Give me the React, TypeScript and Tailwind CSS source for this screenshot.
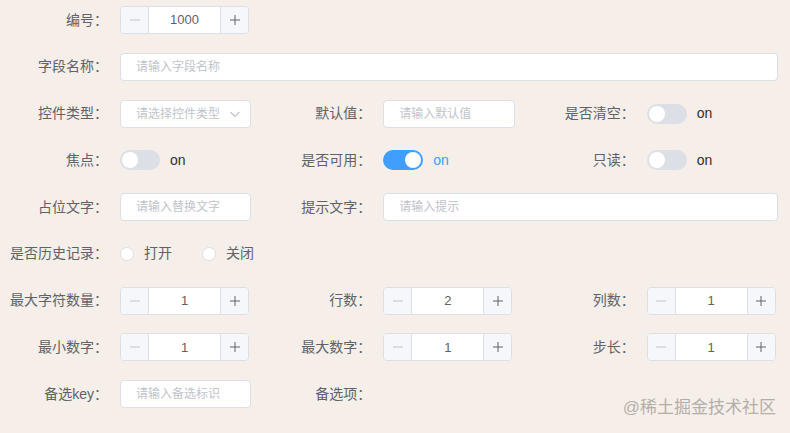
import React from "react";

const FONT = {
  fontFamily:
    '"Liberation Sans", "Noto Sans CJK SC", Arial, sans-serif',
};

function Item({
  label,
  children,
  className = "",
}: {
  label: string;
  children?: React.ReactNode;
  className?: string;
}) {
  return (
    <div className={"flex h-[28px] items-center pr-3 " + className}>
      <label className="w-[120px] shrink-0 pr-3 text-right text-[14px] text-[#606266]">
        {label}：
      </label>
      <div className="flex min-w-0 flex-1 items-center">{children}</div>
    </div>
  );
}

function TextInput({ placeholder }: { placeholder: string }) {
  return (
    <div className="flex h-[28px] w-full items-center rounded-[4px] border border-[#dcdfe6] bg-white px-[15px] text-[12px] text-[#c0c4cc]">
      {placeholder}
    </div>
  );
}

function SelectInput({ placeholder }: { placeholder: string }) {
  return (
    <div className="flex h-[28px] w-full items-center justify-between rounded-[4px] border border-[#dcdfe6] bg-white pl-[15px] pr-[8px] text-[12px] text-[#c0c4cc]">
      <span>{placeholder}</span>
      <svg width="14" height="14" viewBox="0 0 14 14" fill="none">
        <path d="M2.5 5 L7 9.5 L11.5 5" stroke="#c0c4cc" strokeWidth="1.1" />
      </svg>
    </div>
  );
}

function NumberInput({ value }: { value: string }) {
  return (
    <div className="flex h-[28px] w-[129px] items-stretch overflow-hidden rounded-[4px] border border-[#dcdfe6] bg-white">
      <div className="flex w-[28px] items-center justify-center border-r border-[#dcdfe6] bg-[#f5f7fa]">
        <svg width="12" height="12" viewBox="0 0 12 12">
          <path d="M1 6 H11" stroke="#c0c4cc" strokeWidth="1" />
        </svg>
      </div>
      <div className="flex flex-1 items-center justify-center text-[13px] text-[#606266]">
        {value}
      </div>
      <div className="flex w-[28px] items-center justify-center border-l border-[#dcdfe6] bg-[#f5f7fa]">
        <svg width="12" height="12" viewBox="0 0 12 12">
          <path d="M1 6 H11 M6 1 V11" stroke="#606266" strokeWidth="1" />
        </svg>
      </div>
    </div>
  );
}

function Switch({ on = false }: { on?: boolean }) {
  return (
    <div className="flex items-center">
      <div
        className={
          "relative h-[20px] w-[40px] rounded-full " +
          (on ? "bg-[#409eff]" : "bg-[#dcdfe6]")
        }
      >
        <div
          className={
            "absolute top-[2px] h-[16px] w-[16px] rounded-full bg-white " +
            (on ? "left-[22px]" : "left-[2px]")
          }
        />
      </div>
      <span
        className={
          "ml-[10px] text-[14px] " + (on ? "text-[#409eff]" : "text-[#303133]")
        }
      >
        on
      </span>
    </div>
  );
}

function Radio({ label }: { label: string }) {
  return (
    <div className="mr-[30px] flex items-center">
      <span className="h-[14px] w-[14px] rounded-full border border-[#dcdfe6] bg-white" />
      <span className="pl-[10px] text-[14px] text-[#606266]">{label}</span>
    </div>
  );
}

export default function App() {
  return (
    <div
      className="relative h-[433px] w-[790px] overflow-hidden bg-[#f5eee9]"
      style={FONT}
    >
      <div className="grid grid-cols-3 gap-y-[18.75px] pt-[6px]">
        <Item label="编号" className="col-span-3">
          <NumberInput value="1000" />
        </Item>
        <Item label="字段名称" className="col-span-3">
          <TextInput placeholder="请输入字段名称" />
        </Item>

        <Item label="控件类型">
          <SelectInput placeholder="请选择控件类型" />
        </Item>
        <Item label="默认值">
          <TextInput placeholder="请输入默认值" />
        </Item>
        <Item label="是否清空">
          <Switch />
        </Item>

        <Item label="焦点">
          <Switch />
        </Item>
        <Item label="是否可用">
          <Switch on />
        </Item>
        <Item label="只读">
          <Switch />
        </Item>

        <Item label="占位文字">
          <TextInput placeholder="请输入替换文字" />
        </Item>
        <Item label="提示文字" className="col-span-2">
          <TextInput placeholder="请输入提示" />
        </Item>

        <Item label="是否历史记录" className="col-span-3">
          <Radio label="打开" />
          <Radio label="关闭" />
        </Item>

        <Item label="最大字符数量">
          <NumberInput value="1" />
        </Item>
        <Item label="行数">
          <NumberInput value="2" />
        </Item>
        <Item label="列数">
          <NumberInput value="1" />
        </Item>

        <Item label="最小数字">
          <NumberInput value="1" />
        </Item>
        <Item label="最大数字">
          <NumberInput value="1" />
        </Item>
        <Item label="步长">
          <NumberInput value="1" />
        </Item>

        <Item label="备选key">
          <TextInput placeholder="请输入备选标识" />
        </Item>
        <Item label="备选项" />
      </div>

      <div className="absolute bottom-[13px] right-[14px] text-[17px] text-[#b5aea8]">
        @稀土掘金技术社区
      </div>
    </div>
  );
}
